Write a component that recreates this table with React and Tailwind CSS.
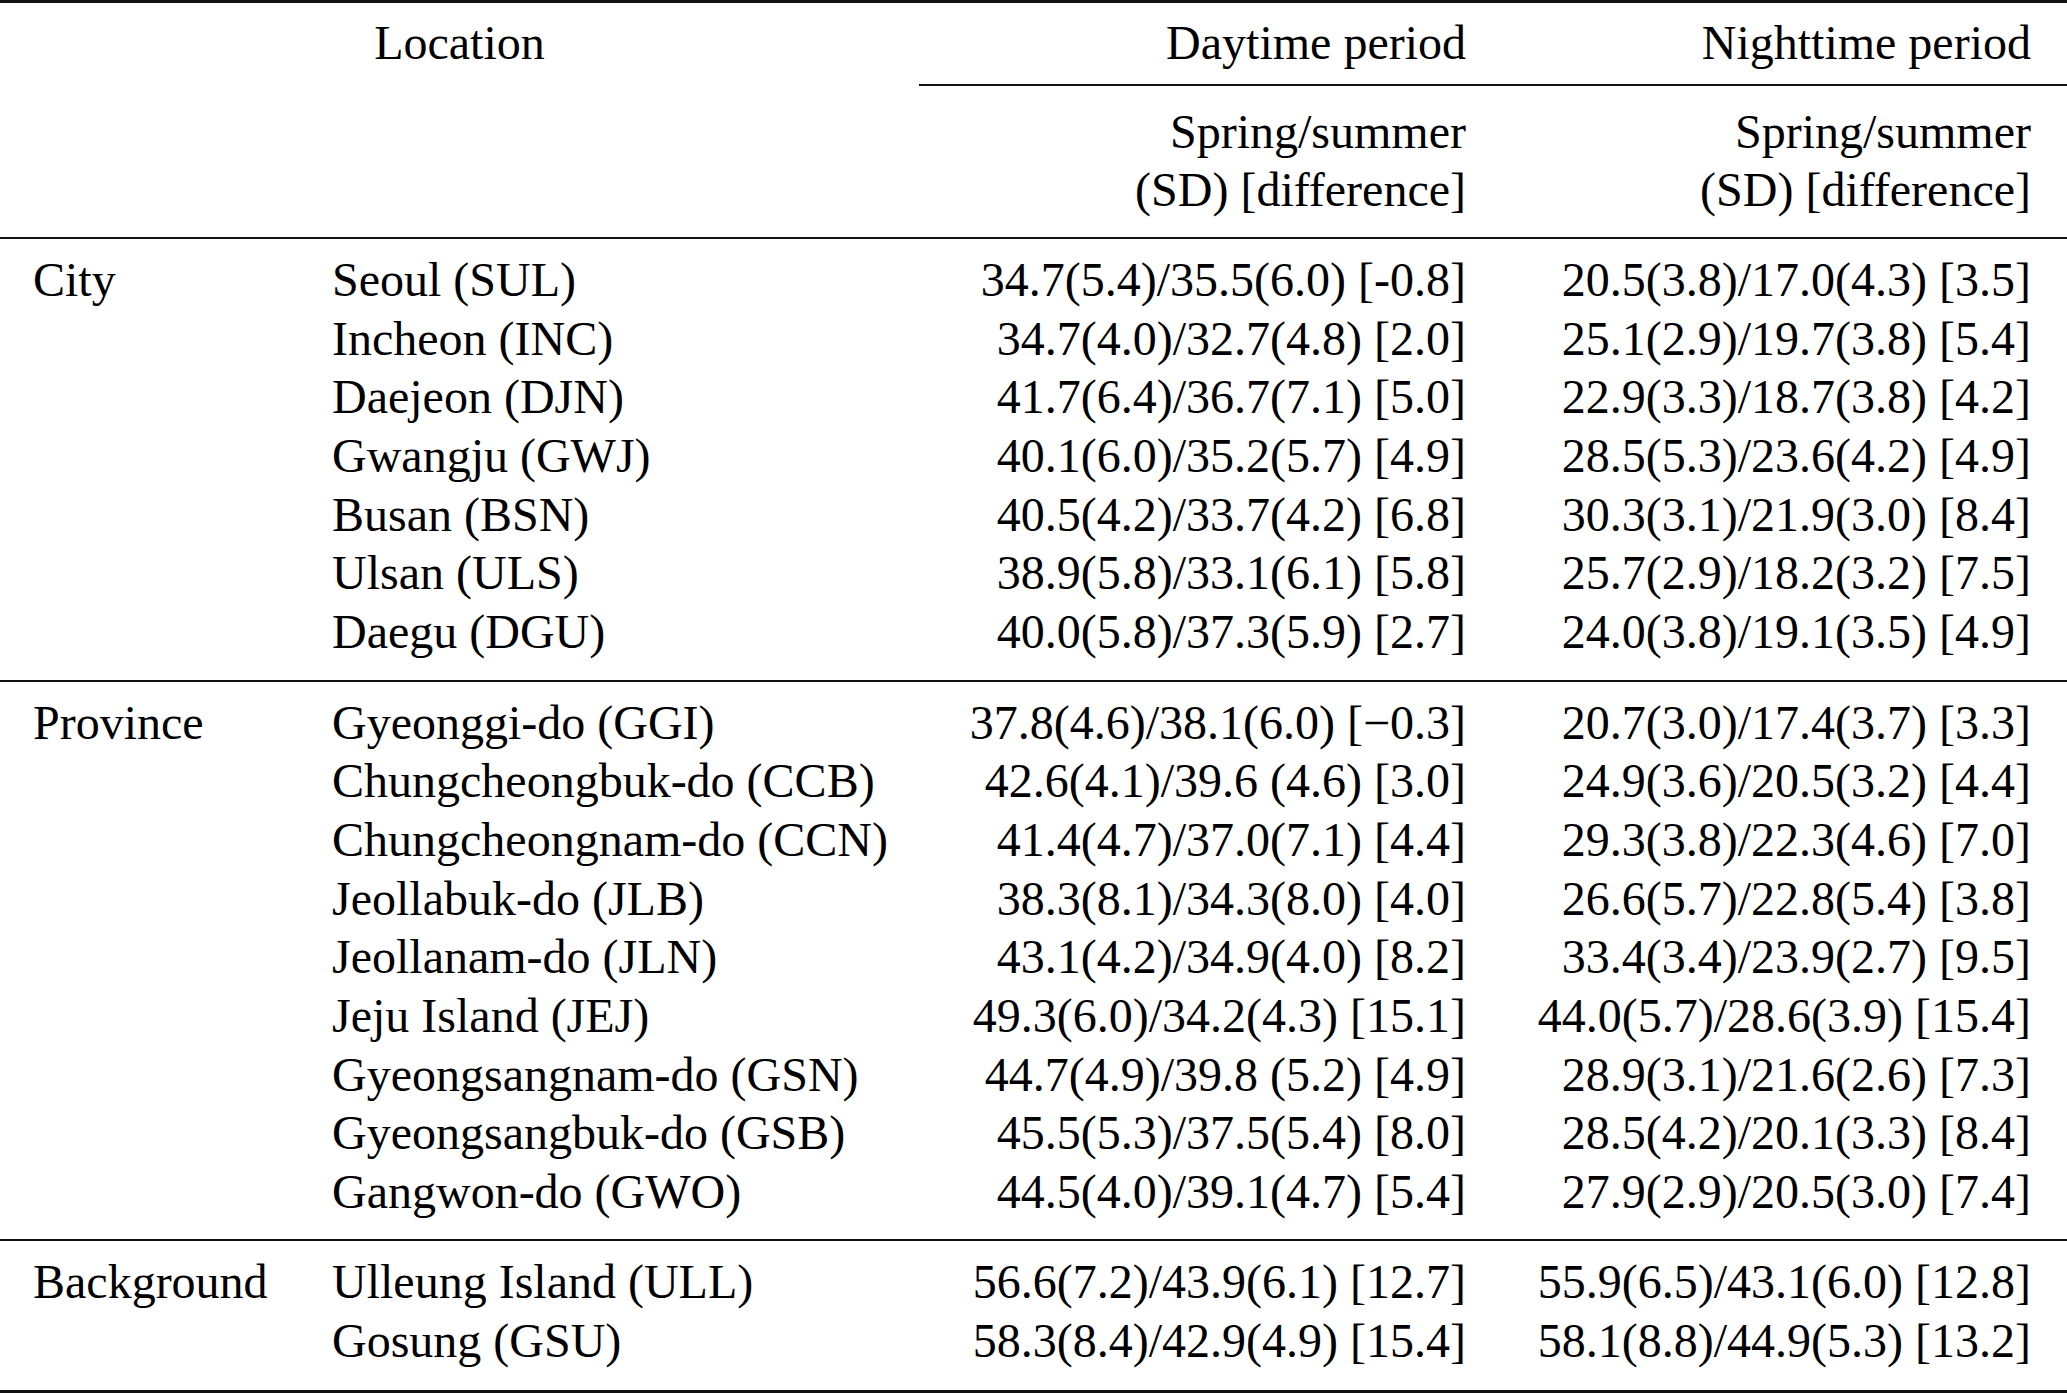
const groups = [
  {
    name: 'City',
    rows: [
      ['Seoul (SUL)', '34.7(5.4)/35.5(6.0) [-0.8]', '20.5(3.8)/17.0(4.3) [3.5]'],
      ['Incheon (INC)', '34.7(4.0)/32.7(4.8) [2.0]', '25.1(2.9)/19.7(3.8) [5.4]'],
      ['Daejeon (DJN)', '41.7(6.4)/36.7(7.1) [5.0]', '22.9(3.3)/18.7(3.8) [4.2]'],
      ['Gwangju (GWJ)', '40.1(6.0)/35.2(5.7) [4.9]', '28.5(5.3)/23.6(4.2) [4.9]'],
      ['Busan (BSN)', '40.5(4.2)/33.7(4.2) [6.8]', '30.3(3.1)/21.9(3.0) [8.4]'],
      ['Ulsan (ULS)', '38.9(5.8)/33.1(6.1) [5.8]', '25.7(2.9)/18.2(3.2) [7.5]'],
      ['Daegu (DGU)', '40.0(5.8)/37.3(5.9) [2.7]', '24.0(3.8)/19.1(3.5) [4.9]'],
    ],
  },
  {
    name: 'Province',
    rows: [
      ['Gyeonggi-do (GGI)', '37.8(4.6)/38.1(6.0) [\u22120.3]', '20.7(3.0)/17.4(3.7) [3.3]'],
      ['Chungcheongbuk-do (CCB)', '42.6(4.1)/39.6 (4.6) [3.0]', '24.9(3.6)/20.5(3.2) [4.4]'],
      ['Chungcheongnam-do (CCN)', '41.4(4.7)/37.0(7.1) [4.4]', '29.3(3.8)/22.3(4.6) [7.0]'],
      ['Jeollabuk-do (JLB)', '38.3(8.1)/34.3(8.0) [4.0]', '26.6(5.7)/22.8(5.4) [3.8]'],
      ['Jeollanam-do (JLN)', '43.1(4.2)/34.9(4.0) [8.2]', '33.4(3.4)/23.9(2.7) [9.5]'],
      ['Jeju Island (JEJ)', '49.3(6.0)/34.2(4.3) [15.1]', '44.0(5.7)/28.6(3.9) [15.4]'],
      ['Gyeongsangnam-do (GSN)', '44.7(4.9)/39.8 (5.2) [4.9]', '28.9(3.1)/21.6(2.6) [7.3]'],
      ['Gyeongsangbuk-do (GSB)', '45.5(5.3)/37.5(5.4) [8.0]', '28.5(4.2)/20.1(3.3) [8.4]'],
      ['Gangwon-do (GWO)', '44.5(4.0)/39.1(4.7) [5.4]', '27.9(2.9)/20.5(3.0) [7.4]'],
    ],
  },
  {
    name: 'Background',
    rows: [
      ['Ulleung Island (ULL)', '56.6(7.2)/43.9(6.1) [12.7]', '55.9(6.5)/43.1(6.0) [12.8]'],
      ['Gosung (GSU)', '58.3(8.4)/42.9(4.9) [15.4]', '58.1(8.8)/44.9(5.3) [13.2]'],
    ],
  },
];

const cols = 'grid grid-cols-[332px_587px_559px_589px]';

function Group({ group, last }) {
  return (
    <div className={`pt-[12px] ${last ? 'pb-[19px]' : 'pb-[18px] border-b-2 border-[#111]'}`}>
      {group.rows.map((r, i) => (
        <div key={r[0]} className={cols}>
          <div className="pl-[33px]">{i === 0 ? group.name : ''}</div>
          <div className="whitespace-nowrap">{r[0]}</div>
          <div className="text-right pr-[12px] whitespace-nowrap">{r[1]}</div>
          <div className="text-right pr-[36px] whitespace-nowrap">{r[2]}</div>
        </div>
      ))}
    </div>
  );
}

export default function App() {
  return (
    <div
      className="w-[2067px] h-[1395px] bg-white text-black text-[48px] leading-[58.65px] overflow-hidden"
      style={{ fontFamily: '"Liberation Serif", "Times New Roman", serif' }}
    >
      <div className="border-t-[3px] border-b-[3px] border-[#111]">
        {/* header */}
        <div className="border-b-2 border-[#111]">
          <div className={`${cols} pt-[11px] pb-[11px]`}>
            <div className="col-span-2 text-center">Location</div>
            <div className="text-right pr-[12px]">Daytime period</div>
            <div className="text-right pr-[36px]">Nighttime period</div>
          </div>
          <div className={cols}>
            <div className="col-span-2" />
            <div className="col-span-2 h-[2px] bg-[#111]" />
          </div>
          <div className={`${cols} pt-[17px] pb-[17px]`}>
            <div className="col-span-2" />
            <div className="text-right pr-[12px]">
              Spring/summer
              <br />
              (SD) [difference]
            </div>
            <div className="text-right pr-[36px]">
              Spring/summer
              <br />
              (SD) [difference]
            </div>
          </div>
        </div>
        {groups.map((g, i) => (
          <Group key={g.name} group={g} last={i === groups.length - 1} />
        ))}
      </div>
    </div>
  );
}
